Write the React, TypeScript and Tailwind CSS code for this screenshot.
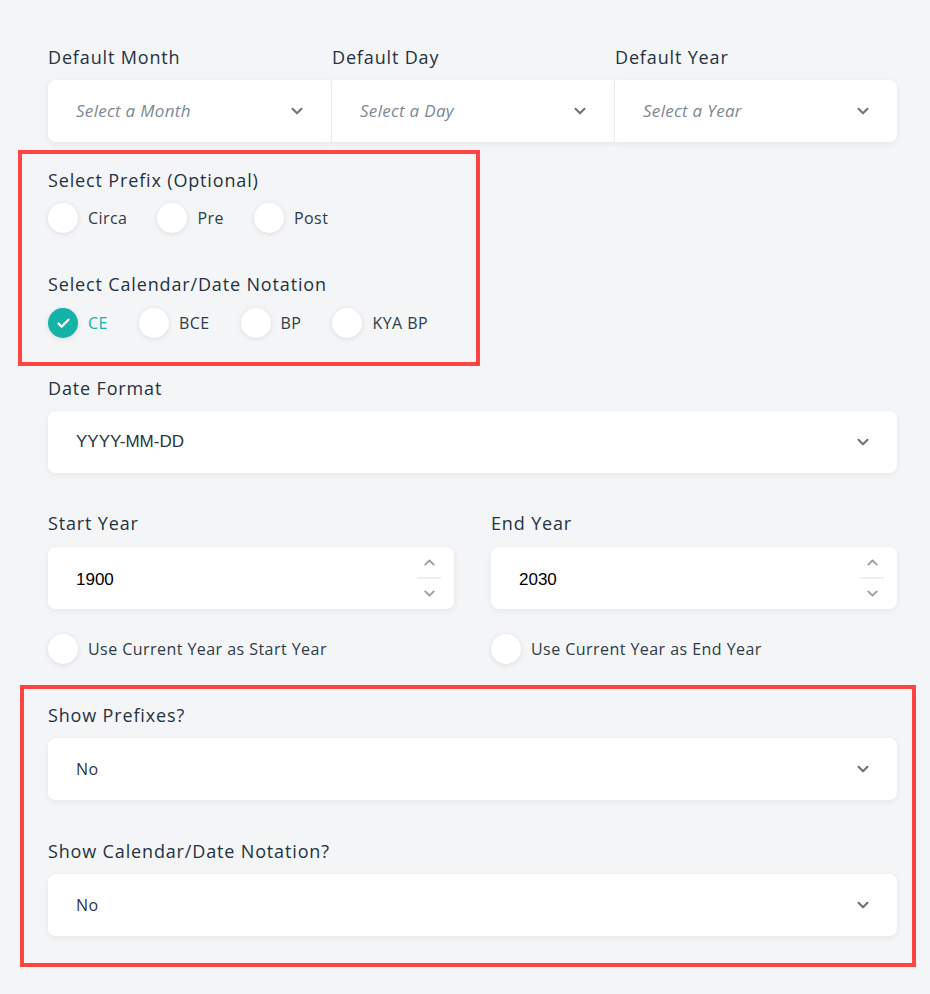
import { ChevronDown, ChevronUp, Check } from 'lucide-react'

const font = { fontFamily: '"Open Sans", "Noto Sans", sans-serif' }

const Label = ({ children }: { children: React.ReactNode }) => (
  <div className="h-6 text-[18px] leading-6 tracking-[0.85px] text-[#243242] whitespace-nowrap">{children}</div>
)

const SelectBox = ({
  value,
  placeholder,
  className = 'rounded-lg',
}: {
  value?: string
  placeholder?: string
  className?: string
}) => (
  <div
    className={`mt-[11px] h-[62px] bg-white flex items-center justify-between pl-[28px] pr-[25px] shadow-[0_2px_6px_rgba(30,40,60,0.07)] ${className}`}
  >
    {placeholder ? (
      <span className="italic text-[17px] tracking-[0.3px] text-[#7e8893] -mt-px">{placeholder}</span>
    ) : (
      <span className="text-[16px] tracking-[0.4px] text-[#2a3645] -mt-px">{value}</span>
    )}
    <ChevronDown size={18} strokeWidth={2.8} className="text-[#6b737d]" />
  </div>
)

const Radio = ({ label, checked = false }: { label: string; checked?: boolean }) => (
  <div className="flex items-center gap-[10px]">
    <span
      className={`w-[30px] h-[30px] rounded-full flex items-center justify-center shadow-[0_1px_5px_rgba(30,40,60,0.12)] ${
        checked ? 'bg-[#14b2a7]' : 'bg-white'
      }`}
    >
      {checked && <Check size={15} strokeWidth={3.5} className="text-white" />}
    </span>
    <span className={`text-[16px] tracking-[0.45px] ${checked ? 'text-[#14b2a7]' : 'text-[#2f3b48]'}`}>{label}</span>
  </div>
)

const NumberBox = ({ value }: { value: string }) => (
  <div className="mt-[12px] h-[62px] bg-white rounded-lg flex items-center justify-between pl-[28px] pr-[13px] shadow-[0_2px_6px_rgba(30,40,60,0.07)]">
    <span className="text-[17px] text-black mt-[3px]" style={{ fontFamily: '"Liberation Sans", Arial, sans-serif' }}>
      {value}
    </span>
    <div className="flex flex-col items-center w-[24px]">
      <ChevronUp size={17} strokeWidth={2.6} className="text-[#979ea6]" />
      <div className="w-[24px] h-[2px] bg-[#eceef0] my-[6px]" />
      <ChevronDown size={17} strokeWidth={2.6} className="text-[#979ea6]" />
    </div>
  </div>
)

export default function App() {
  return (
    <div className="min-h-screen bg-[#f4f5f7] pl-[48px] pr-[33px] pt-[45px]" style={font}>
      <div className="grid grid-cols-3">
        <div>
          <Label>Default Month</Label>
          <SelectBox placeholder="Select a Month" className="rounded-l-lg" />
        </div>
        <div className="border-l border-[#f1f2f4]">
          <Label>Default Day</Label>
          <SelectBox placeholder="Select a Day" className="rounded-none" />
        </div>
        <div className="border-l border-[#f1f2f4]">
          <Label>Default Year</Label>
          <SelectBox placeholder="Select a Year" className="rounded-r-lg" />
        </div>
      </div>

      <div className="mt-[8px] -ml-[30px] w-[462px] border-4 border-[#ff4444] pl-[26px] pt-[14px] pb-[24px]">
        <Label>Select Prefix (Optional)</Label>
        <div className="mt-[11px] flex gap-[30px]">
          <Radio label="Circa" />
          <Radio label="Pre" />
          <Radio label="Post" />
        </div>
        <div className="mt-[39px]">
          <Label>Select Calendar/Date Notation</Label>
        </div>
        <div className="mt-[12px] flex gap-[31px]">
          <Radio label="CE" checked />
          <Radio label="BCE" />
          <Radio label="BP" />
          <Radio label="KYA BP" />
        </div>
      </div>

      <div className="mt-[10px]">
        <Label>Date Format</Label>
        <div className="mt-[11px] h-[62px] bg-white rounded-lg flex items-center justify-between pl-[28px] pr-[25px] shadow-[0_2px_6px_rgba(30,40,60,0.07)]">
          <span className="text-[17px] text-[#2a3645]" style={{ fontFamily: '"Liberation Sans", Arial, sans-serif' }}>
            YYYY-MM-DD
          </span>
          <ChevronDown size={18} strokeWidth={2.8} className="text-[#6b737d]" />
        </div>
      </div>

      <div className="mt-[38px] grid grid-cols-2 gap-[37px]">
        <div>
          <Label>Start Year</Label>
          <NumberBox value="1900" />
          <div className="mt-[25px]">
            <Radio label="Use Current Year as Start Year" />
          </div>
        </div>
        <div>
          <Label>End Year</Label>
          <NumberBox value="2030" />
          <div className="mt-[25px]">
            <Radio label="Use Current Year as End Year" />
          </div>
        </div>
      </div>

      <div className="mt-[21px] -ml-[28px] w-[896px] border-4 border-[#ff4444] pl-[24px] pr-[15px] pt-[14px] pb-[27px]">
        <Label>Show Prefixes?</Label>
        <SelectBox value="No" />
        <div className="mt-[39px]">
          <Label>Show Calendar/Date Notation?</Label>
        </div>
        <SelectBox value="No" />
      </div>
    </div>
  )
}
